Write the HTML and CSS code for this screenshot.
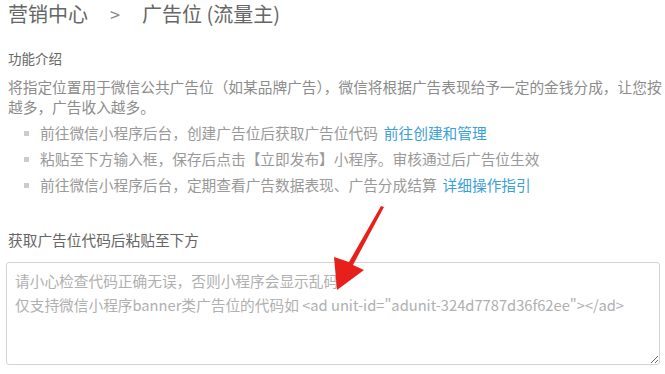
FILE: index.html
```html
<!DOCTYPE html>
<html lang="zh-CN">
<head>
  <meta charset="UTF-8">
  <title>广告位 (流量主)</title>
  <link rel="stylesheet" href="styles.css">
</head>
<body>
  <div class="page">
    <h1 class="crumbs">
      <span>营销中心</span>
      <span class="sep">&gt;</span>
      <span>广告位 (流量主)</span>
    </h1>

    <section class="intro">
      <h2>功能介绍</h2>
      <p class="desc">
        <span class="line">将指定位置用于微信公共广告位（如某品牌广告），微信将根据广告表现给予一定的金钱分成，让您按</span>
        <span class="line">越多，广告收入越多。</span>
      </p>
      <ul class="steps">
        <li>前往微信小程序后台，创建广告位后获取广告位代码 <a href="#">前往创建和管理</a></li>
        <li>粘贴至下方输入框，保存后点击【立即发布】小程序。审核通过后广告位生效</li>
        <li>前往微信小程序后台，定期查看广告数据表现、广告分成结算 <a href="#">详细操作指引</a></li>
      </ul>
    </section>

    <section class="paste">
      <h2>获取广告位代码后粘贴至下方</h2>
      <textarea class="code" placeholder="请小心检查代码正确无误，否则小程序会显示乱码&#10;仅支持微信小程序banner类广告位的代码如 <ad unit-id=&quot;adunit-324d7787d36f62ee&quot;></ad>"></textarea>
    </section>
  </div>

  <!-- red annotation arrow -->
  <svg class="arrow" width="665" height="374" viewBox="0 0 665 374">
    <polygon points="384,207 381,206 349,262 334,257 337,290 364,270 353,265" fill="#e8201c"/>
  </svg>
</body>
</html>
```

FILE: styles.css
```css
body {
  margin: 0;
  background: #fff;
  font-family: "Noto Sans CJK SC", "Noto Sans", sans-serif;
  color: #888;
  overflow: hidden;
}
.page {
  padding: 0 6px 0 8px;
}
.crumbs {
  margin: 0;
  font-size: 20px;
  font-weight: normal;
  color: #666;
  line-height: 28px;
  display: flex;
  gap: 22px;
}
.crumbs .sep {
  color: #888;
  font-size: 18px;
}
h2 {
  margin: 0;
  font-size: 13.5px;
  font-weight: normal;
  color: #666;
}
.intro {
  margin-top: 20px;
}
.intro h2 {
  line-height: 20px;
}
.desc {
  margin: 9px -6px 0 0;
  font-size: 14.7px;
  line-height: 20px;
  color: #8c8c8c;
  overflow: hidden;
}
.desc .line {
  display: block;
  white-space: nowrap;
}
.steps {
  list-style: none;
  margin: 3px 0 0;
  padding: 0 0 0 16px;
  font-size: 14.7px;
  color: #999;
}
.steps li {
  line-height: 26px;
  display: flex;
  align-items: center;
  gap: 3px;
}
.steps li::before {
  content: "";
  width: 5px;
  height: 5px;
  background: #ccc;
  margin-right: 8px;
}
.steps a {
  color: #3aa0d8;
  text-decoration: none;
  margin-left: 3px;
}
.paste {
  margin-top: 32px;
}
.paste h2 {
  font-size: 14.7px;
  color: #666;
  line-height: 20px;
}
.code {
  display: block;
  box-sizing: border-box;
  margin: 12px 0 0 -2px;
  width: 654px;
  height: 103px;
  padding: 6px 8px;
  border: 1px solid #d4d4d4;
  border-radius: 3px;
  font-family: "Noto Sans CJK SC", "Noto Sans", sans-serif;
  font-size: 14.7px;
  line-height: 24px;
  color: #666;
  resize: both;
}
.code::placeholder {
  color: #b0b0b0;
}
.arrow {
  position: absolute;
  left: 0;
  top: 0;
  pointer-events: none;
}
```
